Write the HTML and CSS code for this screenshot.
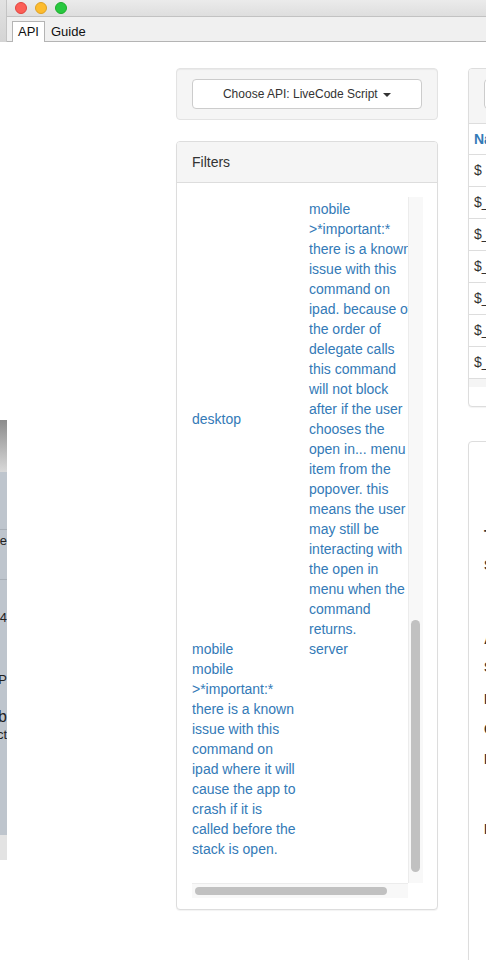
FILE: index.html
```html
<!DOCTYPE html>
<html lang="en">
<head>
    <meta charset="UTF-8">
    <meta name="viewport" content="width=device-width, initial-scale=1.0">
    <title>Dictionary</title>
    <link rel="stylesheet" href="styles.css">
</head>
<body>
    <div class="screen">
        <!-- edge of the window behind -->
        <div class="backdrop">
            <div class="bd-top"></div>
            <div class="bd-gap"></div>
            <div class="bd-shade"></div>
            <div class="bd-list">
                <div class="bd-row bd-first"></div>
                <div class="bd-row"><span>value</span></div>
                <div class="bd-text bd-t1"><span>2004</span></div>
                <div class="bd-text bd-t2"><span>STOP</span></div>
                <div class="bd-text bd-t3 bd-big"><span>b</span></div>
                <div class="bd-text bd-t4"><span>act</span></div>
            </div>
            <div class="bd-foot"></div>
        </div>

        <div class="window">
            <div class="titlebar">
                <span class="light red"></span>
                <span class="light yellow"></span>
                <span class="light green"></span>
            </div>
            <div class="tabbar">
                <div class="tab active">API</div>
                <div class="tab">Guide</div>
            </div>

            <div class="main">
                <div class="col-left">
                    <div class="well">
                        <button type="button" class="api-btn">Choose API: LiveCode Script <span class="caret"></span></button>
                    </div>

                    <div class="panel filters">
                        <div class="panel-heading">Filters</div>
                        <div class="panel-body">
                            <div class="scroller">
                                <div class="viewport">
                                    <div class="filter-grid">
                                        <div class="cell cell-mid">desktop</div>
                                        <div class="cell">mobile<br>&gt;*important:*<br>there is a known<br>issue with this<br>command on<br>ipad. because of<br>the order of<br>delegate calls<br>this command<br>will not block<br>after if the user<br>chooses the<br>open in... menu<br>item from the<br>popover. this<br>means the user<br>may still be<br>interacting with<br>the open in<br>menu when the<br>command<br>returns.</div>
                                        <div class="cell">mobile<br>mobile<br>&gt;*important:*<br>there is a known<br>issue with this<br>command on<br>ipad where it will<br>cause the app to<br>crash if it is<br>called before the<br>stack is open.</div>
                                        <div class="cell">server</div>
                                    </div>
                                </div>
                                <div class="vtrack"><div class="vthumb"></div></div>
                                <div class="htrack"><div class="hthumb"></div></div>
                                <div class="corner"></div>
                            </div>
                        </div>
                    </div>
                </div>

                <div class="col-right">
                    <div class="panel entries">
                        <div class="entries-head">
                            <div class="search-box"></div>
                        </div>
                        <div class="entry-row entry-title">Name</div>
                        <div class="entry-row">$</div>
                        <div class="entry-row">$_GET</div>
                        <div class="entry-row">$_GET_BINARY</div>
                        <div class="entry-row">$_GET_RAW</div>
                        <div class="entry-row">$_POST</div>
                        <div class="entry-row">$_POST_BINARY</div>
                        <div class="entry-row">$_POST_RAW</div>
                        <div class="entries-band"></div>
                        <div class="entries-foot"></div>
                    </div>

                    <div class="panel detail">
                        <div class="detail-line d1">Type</div>
                        <div class="detail-line d2">Syntax</div>
                        <div class="detail-line d3">Associations</div>
                        <div class="detail-line d4">Summary</div>
                        <div class="detail-line d5">Introduced</div>
                        <div class="detail-line d6">Changes</div>
                        <div class="detail-line d7">Parameters</div>
                        <div class="detail-line d8">Description</div>
                    </div>
                </div>
            </div>
        </div>
    </div>
</body>
</html>
```

FILE: styles.css
```css
body {
    margin: 0;
    width: 486px;
    height: 960px;
    overflow: hidden;
    font-family: "Liberation Sans", Arial, sans-serif;
    color: #333;
    background-color: #fff;
}
.screen {
    display: flex;
    height: 960px;
}

/* window behind, only a sliver shows */
.backdrop {
    width: 7px;
    flex-shrink: 0;
    display: flex;
    flex-direction: column;
    font-size: 13px;
    color: #222;
}
.bd-top {
    height: 42px;
    flex-shrink: 0;
    background: linear-gradient(#e2e2e2, #d4d4d4);
    border-right: 1px solid #c4c4c4;
    box-sizing: border-box;
}
.bd-gap {
    height: 378px;
    flex-shrink: 0;
}
.bd-shade {
    height: 52px;
    flex-shrink: 0;
    background: linear-gradient(#8c8c8c, #d9d9d9);
}
.bd-list {
    height: 363px;
    flex-shrink: 0;
    background-color: #bec5cd;
}
.bd-row {
    display: flex;
    justify-content: flex-end;
    height: 49px;
    line-height: 22px;
    border-bottom: 1px solid #a8afb7;
    overflow: hidden;
}
.bd-first {
    height: 57px;
}
.bd-text {
    display: flex;
    justify-content: flex-end;
    line-height: 22px;
    white-space: nowrap;
    overflow: hidden;
}
.bd-t1 { margin-top: 27px; }
.bd-t2 { margin-top: 40px; }
.bd-t3 { margin-top: 17px; line-height: 18px; }
.bd-t4 { line-height: 18px; }
.bd-big { font-size: 16px; }
.bd-foot {
    height: 25px;
    flex-shrink: 0;
    background-color: #e3e3e3;
}

.window {
    flex: 1;
    min-width: 0;
    display: flex;
    flex-direction: column;
}
.titlebar {
    flex-shrink: 0;
    height: 17px;
    display: flex;
    gap: 8px;
    padding: 2px 0 0 8px;
    box-sizing: border-box;
    background: linear-gradient(#ebebeb, #dedede);
    border-bottom: 1px solid #c2c2c2;
}
.light {
    width: 12px;
    height: 12px;
    border-radius: 50%;
    box-sizing: border-box;
}
.red { background-color: #fc5f57; border: 1px solid #e0443e; }
.yellow { background-color: #fdbc2e; border: 1px solid #dea123; }
.green { background-color: #28c840; border: 1px solid #1dad2b; }

.tabbar {
    flex-shrink: 0;
    height: 24px;
    display: flex;
    align-items: flex-end;
    padding-left: 5px;
    background-color: #f0f0f0;
    border-bottom: 1px solid #b4b4b4;
    font-size: 13px;
}
.tab {
    height: 20px;
    line-height: 20px;
    padding: 0 5px;
    margin-bottom: -1px;
    border: 1px solid transparent;
    border-bottom: 0;
    color: #111;
}
.tab.active {
    background-color: #fff;
    border-color: #b4b4b4;
}

.main {
    flex: 1;
    min-height: 0;
    display: flex;
    gap: 30px;
    padding: 26px 0 0 169px;
    overflow: hidden;
}
.col-left {
    width: 262px;
    flex-shrink: 0;
}
.col-right {
    width: 400px;
    flex-shrink: 0;
}

.well {
    background-color: #f5f5f5;
    border: 1px solid #e3e3e3;
    border-radius: 4px;
    padding: 10px 15px;
    box-shadow: inset 0 1px 1px rgba(0, 0, 0, 0.05);
}
.api-btn {
    display: block;
    width: 100%;
    height: 30px;
    background-color: #fff;
    border: 1px solid #ccc;
    border-radius: 4px;
    font-family: "Liberation Sans", Arial, sans-serif;
    font-size: 12px;
    color: #333;
    padding: 0;
}
.caret {
    display: inline-block;
    width: 0;
    height: 0;
    margin-left: 2px;
    vertical-align: middle;
    border-top: 4px solid #333;
    border-left: 4px solid transparent;
    border-right: 4px solid transparent;
}

.panel {
    border: 1px solid #ddd;
    border-radius: 4px;
    background-color: #fff;
    box-shadow: 0 1px 1px rgba(0, 0, 0, 0.05);
}
.filters {
    margin-top: 21px;
}
.panel-heading {
    background-color: #f5f5f5;
    border-bottom: 1px solid #ddd;
    border-radius: 3px 3px 0 0;
    padding: 10px 15px;
    line-height: 20px;
    font-size: 14px;
}
.panel-body {
    padding: 14px 15px 11px;
}

.scroller {
    display: grid;
    grid-template-columns: 216px 15px;
    grid-template-rows: 686px 15px;
}
.viewport {
    overflow: hidden;
}
.filter-grid {
    display: grid;
    grid-template-columns: 117px max-content;
    padding-top: 2px;
    font-size: 14px;
    line-height: 20px;
    color: #337ab7;
    white-space: nowrap;
}
.cell-mid {
    align-self: center;
}
.vtrack {
    background-color: #f8f8f8;
    border-left: 1px solid #ececec;
    padding: 423px 0 0 2px;
}
.vthumb {
    width: 9px;
    height: 252px;
    border-radius: 5px;
    background-color: #c1c1c1;
}
.htrack {
    background-color: #f8f8f8;
    border-top: 1px solid #ececec;
    padding: 3px 0 0 3px;
}
.hthumb {
    width: 192px;
    height: 8px;
    border-radius: 4px;
    background-color: #c1c1c1;
}
.corner {
    background-color: #fff;
}

.entries-head {
    background-color: #f5f5f5;
    border-bottom: 1px solid #ddd;
    border-radius: 3px 3px 0 0;
    padding: 10px 15px 14px;
}
.search-box {
    height: 30px;
    background-color: #fff;
    border: 1px solid #ccc;
    border-radius: 4px;
    box-sizing: border-box;
}
.entry-row {
    height: 31px;
    line-height: 31px;
    padding-left: 5px;
    border-top: 1px solid #ddd;
    font-size: 14px;
}
.entry-title {
    height: 30px;
    line-height: 30px;
    border-top: 0;
    font-weight: bold;
    color: #337ab7;
}
.entries-band {
    height: 8px;
    background-color: #f5f5f5;
    border-top: 1px solid #ddd;
}
.entries-foot {
    height: 19px;
}

.detail {
    margin-top: 34px;
    height: 600px;
    padding: 83px 15px 0;
}
.detail-line {
    font-size: 14px;
    line-height: 20px;
    font-weight: bold;
    white-space: nowrap;
}
.d2 { margin-top: 10px; }
.d3 { margin-top: 54px; }
.d4 { margin-top: 8px; }
.d5 { margin-top: 12px; }
.d6 { margin-top: 10px; }
.d7 { margin-top: 10px; }
.d8 { margin-top: 50px; }
```
